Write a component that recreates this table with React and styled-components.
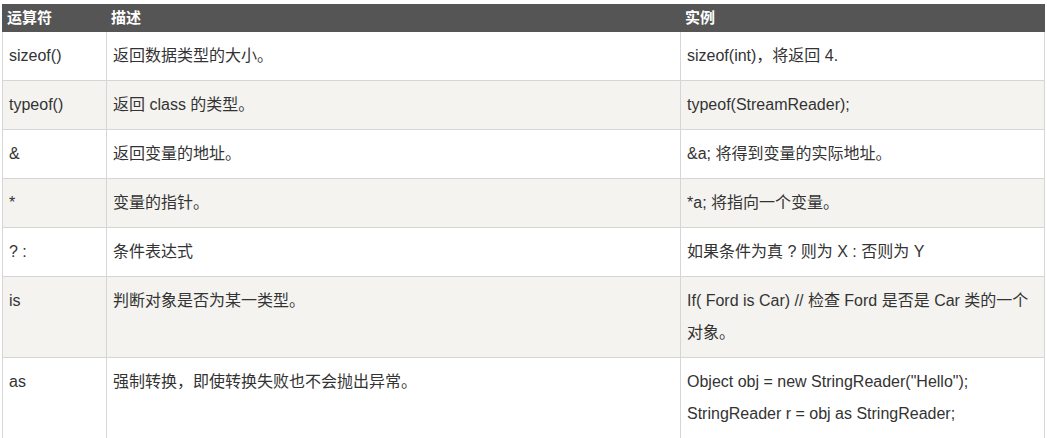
import styled, { createGlobalStyle } from "styled-components";

const GlobalStyle = createGlobalStyle`
  html, body {
    margin: 0;
    padding: 0;
    background: #fff;
  }
  body {
    font-family: "Liberation Sans", Arial, "Noto Sans CJK SC", sans-serif;
    color: #333;
  }
`;

const Page = styled.div`
  padding: 4px 0 0 2px;
`;

const Table = styled.table`
  width: 1043px;
  border-collapse: collapse;
  table-layout: fixed;
  font-size: 16px;
`;

const HeadCell = styled.th`
  background-color: #555;
  color: #fff;
  font-size: 15px;
  font-weight: bold;
  text-align: left;
  line-height: 20px;
  padding: 3px 4px;
  border: 1px solid #555;
`;

const Row = styled.tr`
  background-color: ${(p) => (p.$alt ? "#f4f3f0" : "#fff")};
`;

const Cell = styled.td`
  border: 1px solid #d6d6d6;
  padding: 8px 6px;
  line-height: 32px;
  vertical-align: top;
  word-break: break-all;
`;

const rows = [
  ["sizeof()", "返回数据类型的大小。", "sizeof(int)，将返回 4."],
  ["typeof()", "返回 class 的类型。", "typeof(StreamReader);"],
  ["&", "返回变量的地址。", "&a; 将得到变量的实际地址。"],
  ["*", "变量的指针。", "*a; 将指向一个变量。"],
  ["? :", "条件表达式", "如果条件为真 ? 则为 X : 否则为 Y"],
  ["is", "判断对象是否为某一类型。", "If( Ford is Car) // 检查 Ford 是否是 Car 类的一个对象。"],
  [
    "as",
    "强制转换，即使转换失败也不会抛出异常。",
    <>
      Object obj = new StringReader("Hello");
      <br />
      StringReader r = obj as StringReader;
    </>,
  ],
];

export default function App() {
  return (
    <>
      <GlobalStyle />
      <Page>
        <Table>
          <colgroup>
            <col style={{ width: 104 }} />
            <col style={{ width: 574 }} />
            <col />
          </colgroup>
          <thead>
            <tr>
              <HeadCell>运算符</HeadCell>
              <HeadCell>描述</HeadCell>
              <HeadCell>实例</HeadCell>
            </tr>
          </thead>
          <tbody>
            {rows.map((r, i) => (
              <Row key={i} $alt={i % 2 === 1}>
                <Cell>{r[0]}</Cell>
                <Cell>{r[1]}</Cell>
                <Cell>{r[2]}</Cell>
              </Row>
            ))}
          </tbody>
        </Table>
      </Page>
    </>
  );
}
